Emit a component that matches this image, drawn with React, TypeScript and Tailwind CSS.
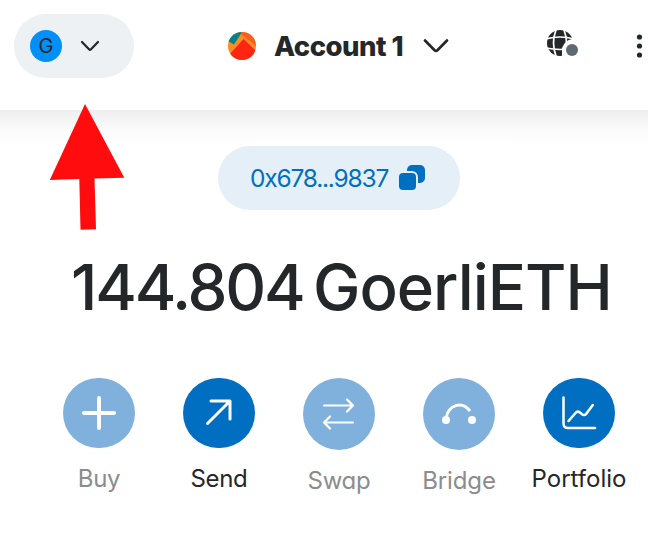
import type { ReactNode } from "react";

function Action({ label, muted = false, tall = false, track, children }: { label: string; muted?: boolean; tall?: boolean; track: string; children: ReactNode }) {
  return (
    <div className="flex w-[120px] flex-col items-center">
      <div className={`w-[72px] rounded-full ${tall ? "h-[72px]" : "h-[70px]"} ${muted ? "bg-[#80b1dd]" : "bg-[#006fc1]"}`}>
        <svg width="72" height="72" viewBox="0 0 72 72" fill="none" stroke="white" strokeLinecap="round" strokeLinejoin="round">
          {children}
        </svg>
      </div>
      <div className={`mt-[15px] whitespace-nowrap text-[24px] leading-[32px] ${track} ${muted ? "text-[#8b8c8e]" : "text-[#24272a]"}`}>{label}</div>
    </div>
  );
}

export default function App() {
  return (
    <div className="relative h-[552px] w-[648px] overflow-hidden bg-white font-['Inter',sans-serif] text-[#24272a] [font-feature-settings:'cv11']">
      <header className="flex h-[110px] items-start pl-[14px] pt-[14px]">
        <button className="flex h-16 w-[120px] items-center rounded-full bg-[#edf1f4] pl-4">
          <span className="flex size-8 items-center justify-center rounded-full bg-[#0190f9] text-[20px] leading-none">G</span>
          <svg className="ml-[18px]" width="20" height="12" viewBox="0 0 20 12" fill="none" stroke="#24272a" strokeWidth="2.2" strokeLinecap="round" strokeLinejoin="round">
            <path d="M2 2l7 7.3q1 1 2 0L18 2" />
          </svg>
        </button>
        <div className="ml-[94px] flex h-16 w-[222px] items-center">
          <svg width="28" height="28" viewBox="0 0 28 28" className="shrink-0 overflow-hidden rounded-full">
            <rect width="28" height="28" fill="#fa8b25" />
            <path d="M0 0h14L6 12.5 0 9z" fill="#038287" />
            <path d="M14 0h14v14L13 2z" fill="#fc5e1b" />
            <path d="M0 24L15.5 7 29 20v8H0z" fill="#ff2611" />
          </svg>
          <span className="ml-[18px] w-[132px] whitespace-nowrap text-[27.5px] font-extrabold leading-8 tracking-[-0.5px]">Account 1</span>
          <svg className="ml-[17px] shrink-0" width="28" height="18" viewBox="0 0 28 18" fill="none" stroke="#24272a" strokeWidth="2.7" strokeLinecap="round" strokeLinejoin="round">
            <path d="M3 3.5l9.6 9.8q1.4 1.4 2.8 0L25 3.5" />
          </svg>
        </div>
        <div className="ml-[96px] flex h-16 items-center">
          <svg width="34" height="32" viewBox="0 0 34 32">
            <circle cx="14" cy="13" r="13" fill="#24272a" />
            <path d="M0 9q14-4 28 0M0 18q14 3 28 0M10 0q-5 13 0 26M18 0q5 13 0 26" fill="none" stroke="white" strokeWidth="1.7" />
            <path d="M33 9h-7q-7 1-10 9l0 10h17z" fill="white" />
            <circle cx="26" cy="20" r="6" fill="#5d6975" />
          </svg>
          <svg className="ml-[55px]" width="8" height="24" viewBox="0 0 8 24" fill="#24272a">
            <circle cx="4.5" cy="3" r="2.6" />
            <circle cx="4.5" cy="12" r="2.6" />
            <circle cx="4.5" cy="21" r="2.6" />
          </svg>
        </div>
      </header>
      <main className="h-[442px] bg-[linear-gradient(to_bottom,#eeeeee_0px,#f6f6f6_12px,#fcfcfc_24px,#ffffff_36px)] pt-9">
        <button className="ml-[218px] flex h-16 w-[242px] items-center rounded-full bg-[#e5eff7] pl-8 text-[#006fc1]">
          <span className="w-[142px] whitespace-nowrap text-left text-[24.5px] leading-8 tracking-[-1.2px]">0x678...9837</span>
          <svg className="ml-[6px]" width="28" height="28" viewBox="0 0 28 28">
            <rect x="9" y="1" width="18" height="18" rx="5" fill="#006fc1" />
            <rect x="0" y="8" width="19" height="19" rx="5" fill="#006fc1" stroke="#e5eff7" strokeWidth="2" />
          </svg>
        </button>
        <div className="mt-[37px] flex h-[80px] items-center whitespace-nowrap pl-[71px] text-[63.5px] font-medium leading-none">
          <span className="w-[242px] tracking-[-2.2px]">144.804</span>
          <span className="tracking-[-1px]">GoerliETH</span>
        </div>
        <div className="ml-[39px] mt-[51px] flex w-[600px]">
          <Action label="Buy" muted track="tracking-[-0.3px]">
            <path d="M36 20v30M21 35h30" strokeWidth="4" />
          </Action>
          <Action label="Send" track="tracking-[-0.3px]">
            <path d="M24.5 45.5L46 24M28 23h19v18" strokeWidth="3" />
          </Action>
          <Action label="Swap" muted tall track="tracking-[-0.3px]">
            <path d="M21 27.5h29M44 21.5l6 6-6 6M50 44.5H21M27 38.5l-6 6 6 6" strokeWidth="2.2" />
          </Action>
          <Action label="Bridge" muted tall track="tracking-[-0.1px]">
            <path d="M23 41C25 26 39 23 47 33" strokeWidth="3" strokeLinecap="butt" />
            <circle cx="23" cy="42" r="4" fill="white" stroke="none" />
            <circle cx="49" cy="42" r="4" fill="white" stroke="none" />
          </Action>
          <Action label="Portfolio" track="tracking-[0px]">
            <path d="M20.5 19.5v26q0 4.5 4.5 4.5h27M25.5 43l7-8q2-2.5 4.5-.5l2 1.7q2.5 2 4.5-.7l6.3-8.5" strokeWidth="2.5" />
          </Action>
        </div>
      </main>
      <svg className="absolute left-[48px] top-[102px]" width="80" height="130" viewBox="0 0 80 130" fill="#ff0c0f">
        <path d="M37 2L76.3 75.8 46.5 76.6 48 127.2 32.5 127.7 31.3 77.1 1.8 78z" />
      </svg>
    </div>
  );
}
